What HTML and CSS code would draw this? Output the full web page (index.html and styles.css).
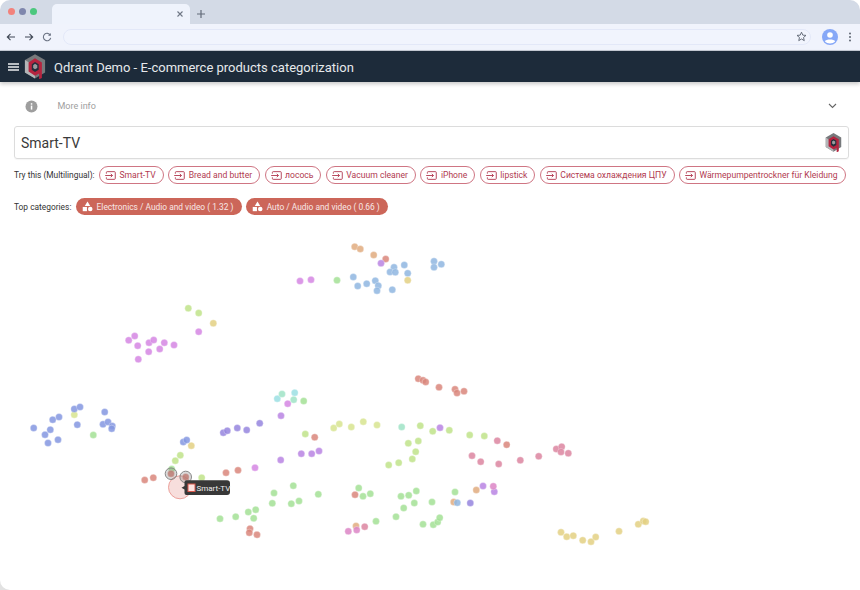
FILE: index.html
```html
<!DOCTYPE html>
<html lang="en">
<head>
<meta charset="utf-8">
<title>Qdrant Demo</title>
<link rel="stylesheet" href="styles.css">
</head>
<body>
<svg width="0" height="0" class="defs">
  <defs>
    <symbol id="qlogo" viewBox="0 0 24 27">
      <polygon points="12,0 23,6.500 23,20 12,26.500 1,20 1,6.500" fill="#77797c"/>
      <polygon points="1,6.500 6,9.500 6,17 12,20.500 12,26.500 1,20" fill="#b3b5b7"/>
      <polygon points="12,4.500 19.500,9 19.500,26 16.500,27.500 16.500,21 12,23.500 5,19 5,9" fill="#b5243f"/>
      <polygon points="12,8.500 16,11 16,17 12,19.500 8.500,17 8.500,11" fill="#23303c"/>
      <polygon points="12,10.500 14.500,12 14.500,15 12,16.500 10,15 10,12" fill="#9a9c9e"/>
    </symbol>
    <symbol id="ienter" viewBox="0 0 12 12">
      <path d="M1.500 4V2.700Q1.500 1.800 2.400 1.800H10.300Q11.200 1.800 11.200 2.700V9.300Q11.200 10.200 10.300 10.200H2.400Q1.500 10.200 1.500 9.300V8" fill="none" stroke="currentColor"/>
      <path d="M.2 6H8M6.300 4.200 8.200 6 6.300 7.800" fill="none" stroke="currentColor"/>
    </symbol>
    <symbol id="icats" viewBox="0 0 12 12">
      <path d="M6 .5 9 5.500H3Z" fill="#fff"/>
      <rect x=".8" y="6.500" width="4.600" height="4.600" fill="#fff"/>
      <circle cx="9" cy="8.800" r="2.500" fill="#fff"/>
    </symbol>
  </defs>
</svg>
<div class="window">
  <header class="browser">
    <div class="tabstrip">
      <div class="lights">
        <span class="light light-red"></span>
        <span class="light light-grey"></span>
        <span class="light light-green"></span>
      </div>
      <div class="tab">
        <svg class="tab-close" width="8" height="8" viewBox="0 0 8 8"><path d="M1.500 1.500 6.500 6.500M6.500 1.500 1.500 6.500" stroke="#6f7785" stroke-width="1.100"/></svg>
      </div>
      <svg class="tab-new" width="10" height="10" viewBox="0 0 10 10"><path d="M5 1V9M1 5H9" stroke="#626a78" stroke-width="1.200"/></svg>
    </div>
    <div class="toolbar">
      <svg class="nav-icon" width="10" height="10" viewBox="0 0 10 10"><path d="M9 5H1.500M4.500 1.800 1.300 5 4.500 8.200" fill="none" stroke="#3f4754" stroke-width="1.100"/></svg>
      <svg class="nav-icon" width="10" height="10" viewBox="0 0 10 10"><path d="M1 5H8.500M5.500 1.800 8.700 5 5.500 8.200" fill="none" stroke="#3f4754" stroke-width="1.100"/></svg>
      <svg class="nav-icon" width="10" height="10" viewBox="0 0 10 10"><path d="M8.300 3.200A3.700 3.700 0 1 0 8.700 5.800" fill="none" stroke="#6d7585" stroke-width="1.100"/><path d="M8.800.9V3.700H6Z" fill="#6d7585"/></svg>
      <div class="address">
        <svg width="11" height="11" viewBox="0 0 12 12"><path d="M6 1.300 7.400 4.500 10.900 4.800 8.200 7.100 9 10.500 6 8.700 3 10.500 3.800 7.100 1.100 4.800 4.600 4.500Z" fill="none" stroke="#5d6572" stroke-width="1"/></svg>
      </div>
      <svg class="avatar" width="16" height="16" viewBox="0 0 16 16"><circle cx="8" cy="8" r="8" fill="#86a8f7"/><circle cx="8" cy="6" r="2.800" fill="#fff"/><path d="M2.800 12.300C4 9.900 12 9.900 13.200 12.300 10.500 15.200 5.500 15.200 2.800 12.300Z" fill="#fff"/></svg>
      <svg class="menu-dots" width="4" height="10" viewBox="0 0 4 10"><circle cx="2" cy="1.500" r="1" fill="#5f6773"/><circle cx="2" cy="5" r="1" fill="#5f6773"/><circle cx="2" cy="8.500" r="1" fill="#5f6773"/></svg>
    </div>
  </header>
  <div class="appbar">
    <svg class="burger" width="11" height="8" viewBox="0 0 11 8"><path d="M0 1H11M0 4H11M0 7H11" stroke="#eceef0" stroke-width="1.300"/></svg>
    <svg class="app-logo" width="22" height="25"><use href="#qlogo"/></svg>
    <div class="app-title">Qdrant Demo - E-commerce products categorization</div>
  </div>
  <main class="content">
    <div class="info">
      <svg class="info-icon" width="13" height="13" viewBox="0 0 13 13"><circle cx="6.500" cy="6.500" r="6" fill="#9e9e9e"/><rect x="5.800" y="5.600" width="1.500" height="4" fill="#fff"/><rect x="5.800" y="3.200" width="1.500" height="1.500" fill="#fff"/></svg>
      <span class="info-text">More info</span>
      <svg class="info-chevron" width="9" height="6" viewBox="0 0 9 6"><path d="M1 1 4.500 4.500 8 1" fill="none" stroke="#666" stroke-width="1.100"/></svg>
    </div>
    <div class="search">
      <span class="search-text">Smart-TV</span>
      <svg width="17" height="19"><use href="#qlogo"/></svg>
    </div>
    <div class="chips chips-try">
      <span class="chips-label">Try this (Multilingual):</span>
      <span class="chip"><svg width="11" height="11"><use href="#ienter"/></svg>Smart-TV</span>
      <span class="chip"><svg width="11" height="11"><use href="#ienter"/></svg>Bread and butter</span>
      <span class="chip"><svg width="11" height="11"><use href="#ienter"/></svg>лосось</span>
      <span class="chip"><svg width="11" height="11"><use href="#ienter"/></svg>Vacuum cleaner</span>
      <span class="chip"><svg width="11" height="11"><use href="#ienter"/></svg>iPhone</span>
      <span class="chip"><svg width="11" height="11"><use href="#ienter"/></svg>lipstick</span>
      <span class="chip"><svg width="11" height="11"><use href="#ienter"/></svg>Система охлаждения ЦПУ</span>
      <span class="chip"><svg width="11" height="11"><use href="#ienter"/></svg>Wärmepumpentrockner für Kleidung</span>
    </div>
    <div class="chips chips-top">
      <span class="chips-label">Top categories:</span>
      <span class="chip chip-filled"><svg width="11" height="11"><use href="#icats"/></svg>Electronics / Audio and video ( 1.32 )</span>
      <span class="chip chip-filled"><svg width="11" height="11"><use href="#icats"/></svg>Auto / Audio and video ( 0.66 )</span>
    </div>
    <svg class="plot" width="860" height="370" viewBox="0 220 860 370">
      <g class="pts d-peach"><circle cx="354.7" cy="246.7" r="3.300"/><circle cx="360.3" cy="249" r="3.300"/><circle cx="373.7" cy="255" r="3.300"/><circle cx="453.7" cy="502" r="3.300"/><circle cx="476.3" cy="490" r="3.300"/><circle cx="356" cy="526" r="3.300"/></g>
      <g class="pts d-red"><circle cx="385.7" cy="259" r="3.300"/><circle cx="314.7" cy="437.3" r="3.300"/><circle cx="418.3" cy="378.7" r="3.300"/><circle cx="423" cy="380.3" r="3.300"/><circle cx="425.7" cy="382" r="3.300"/><circle cx="439" cy="387.3" r="3.300"/><circle cx="455" cy="389.3" r="3.300"/><circle cx="457" cy="393" r="3.300"/><circle cx="464" cy="391.3" r="3.300"/><circle cx="506.7" cy="444.7" r="3.300"/><circle cx="355" cy="494.7" r="3.300"/><circle cx="144.7" cy="480" r="3.300"/><circle cx="153.3" cy="477.7" r="3.300"/><circle cx="226" cy="472.7" r="3.300"/><circle cx="238" cy="470.3" r="3.300"/><circle cx="250" cy="528.7" r="3.300"/><circle cx="249.3" cy="532.7" r="3.300"/><circle cx="257" cy="534.7" r="3.300"/></g>
      <g class="pts d-violet"><circle cx="381" cy="263.3" r="3.300"/><circle cx="281" cy="415.7" r="3.300"/><circle cx="440" cy="427.7" r="3.300"/><circle cx="280.7" cy="460" r="3.300"/><circle cx="301.3" cy="453.7" r="3.300"/><circle cx="311.7" cy="453.7" r="3.300"/><circle cx="319" cy="451" r="3.300"/><circle cx="483" cy="486" r="3.300"/><circle cx="494.3" cy="491.7" r="3.300"/></g>
      <g class="pts d-blue"><circle cx="394" cy="267.3" r="3.300"/><circle cx="404.3" cy="265" r="3.300"/><circle cx="390" cy="272" r="3.300"/><circle cx="395.3" cy="272.3" r="3.300"/><circle cx="407.7" cy="273.3" r="3.300"/><circle cx="434" cy="261.3" r="3.300"/><circle cx="441.3" cy="264.3" r="3.300"/><circle cx="434" cy="267.3" r="3.300"/><circle cx="353.3" cy="277" r="3.300"/><circle cx="357.7" cy="286" r="3.300"/><circle cx="366.7" cy="283.7" r="3.300"/><circle cx="375.3" cy="280.7" r="3.300"/><circle cx="378.3" cy="285.7" r="3.300"/><circle cx="377" cy="290.7" r="3.300"/><circle cx="392.3" cy="289.7" r="3.300"/><circle cx="457.3" cy="502.7" r="3.300"/></g>
      <g class="pts d-yellow"><circle cx="407.7" cy="280.3" r="3.300"/><circle cx="213.3" cy="323.3" r="3.300"/><circle cx="191.3" cy="445.7" r="3.300"/><circle cx="561" cy="532.3" r="3.300"/><circle cx="566.7" cy="536.7" r="3.300"/><circle cx="573.3" cy="535.7" r="3.300"/><circle cx="582.7" cy="540.3" r="3.300"/><circle cx="591" cy="541.7" r="3.300"/><circle cx="595.7" cy="537" r="3.300"/><circle cx="619" cy="531.3" r="3.300"/><circle cx="638.3" cy="524.3" r="3.300"/><circle cx="643.3" cy="521" r="3.300"/><circle cx="645.7" cy="521.7" r="3.300"/></g>
      <g class="pts d-orchid"><circle cx="300" cy="281" r="3.300"/><circle cx="311" cy="279.7" r="3.300"/><circle cx="198.7" cy="331.7" r="3.300"/><circle cx="128.7" cy="340.3" r="3.300"/><circle cx="134.7" cy="336" r="3.300"/><circle cx="137.7" cy="345.7" r="3.300"/><circle cx="149" cy="342.7" r="3.300"/><circle cx="153.7" cy="340" r="3.300"/><circle cx="164.3" cy="342.7" r="3.300"/><circle cx="174" cy="345" r="3.300"/><circle cx="148.7" cy="351.7" r="3.300"/><circle cx="159.7" cy="349" r="3.300"/><circle cx="138.3" cy="359.3" r="3.300"/><circle cx="287.7" cy="403.7" r="3.300"/><circle cx="255" cy="467.7" r="3.300"/></g>
      <g class="pts d-green"><circle cx="337" cy="280.3" r="3.300"/><circle cx="93.3" cy="435" r="3.300"/><circle cx="303.7" cy="401" r="3.300"/><circle cx="293.3" cy="485.7" r="3.300"/><circle cx="274" cy="493" r="3.300"/><circle cx="272.3" cy="503.3" r="3.300"/><circle cx="291.3" cy="503.7" r="3.300"/><circle cx="299" cy="501" r="3.300"/><circle cx="318.3" cy="494.3" r="3.300"/><circle cx="358.7" cy="488" r="3.300"/><circle cx="363" cy="496.3" r="3.300"/><circle cx="370.3" cy="493.7" r="3.300"/><circle cx="401" cy="496.3" r="3.300"/><circle cx="408.7" cy="495.3" r="3.300"/><circle cx="416.3" cy="491" r="3.300"/><circle cx="414.3" cy="503" r="3.300"/><circle cx="403.7" cy="508" r="3.300"/><circle cx="396" cy="516.7" r="3.300"/><circle cx="376" cy="521.3" r="3.300"/><circle cx="432" cy="502" r="3.300"/><circle cx="455" cy="492" r="3.300"/><circle cx="423" cy="524.3" r="3.300"/><circle cx="433.3" cy="524.7" r="3.300"/><circle cx="437.7" cy="522" r="3.300"/><circle cx="439.7" cy="517.7" r="3.300"/><circle cx="171.7" cy="469" r="3.300"/><circle cx="220" cy="518.7" r="3.300"/><circle cx="235.7" cy="516.7" r="3.300"/><circle cx="248.3" cy="512" r="3.300"/><circle cx="255.7" cy="509.7" r="3.300"/><circle cx="253.7" cy="518.3" r="3.300"/></g>
      <g class="pts d-lime"><circle cx="188.3" cy="308.3" r="3.300"/><circle cx="198.7" cy="313" r="3.300"/><circle cx="305.3" cy="434" r="3.300"/><circle cx="420.3" cy="425.7" r="3.300"/><circle cx="432.7" cy="431.3" r="3.300"/><circle cx="449.3" cy="430.3" r="3.300"/><circle cx="408.3" cy="443.3" r="3.300"/><circle cx="418.3" cy="441" r="3.300"/><circle cx="415.7" cy="451.7" r="3.300"/><circle cx="412.3" cy="459" r="3.300"/><circle cx="398.7" cy="462.7" r="3.300"/><circle cx="388.7" cy="465" r="3.300"/><circle cx="469.7" cy="435" r="3.300"/><circle cx="484.3" cy="436" r="3.300"/><circle cx="180.3" cy="455.3" r="3.300"/><circle cx="175.3" cy="460.7" r="3.300"/><circle cx="201.7" cy="477.7" r="3.300"/></g>
      <g class="pts d-sallow"><circle cx="74.3" cy="414.7" r="3.300"/><circle cx="333.7" cy="428" r="3.300"/><circle cx="339.3" cy="424" r="3.300"/><circle cx="351.3" cy="427" r="3.300"/><circle cx="363.3" cy="421.7" r="3.300"/><circle cx="377" cy="425" r="3.300"/></g>
      <g class="pts d-indigo"><circle cx="33.7" cy="428" r="3.300"/><circle cx="45" cy="434.7" r="3.300"/><circle cx="50.3" cy="429.7" r="3.300"/><circle cx="48" cy="443" r="3.300"/><circle cx="58" cy="439.7" r="3.300"/><circle cx="52.7" cy="419.7" r="3.300"/><circle cx="59" cy="417" r="3.300"/><circle cx="74.3" cy="409" r="3.300"/><circle cx="80" cy="407" r="3.300"/><circle cx="77.3" cy="424.7" r="3.300"/><circle cx="104.7" cy="412" r="3.300"/><circle cx="103" cy="424.3" r="3.300"/><circle cx="108" cy="422" r="3.300"/><circle cx="112.3" cy="426" r="3.300"/><circle cx="111.7" cy="428.7" r="3.300"/><circle cx="183.3" cy="442" r="3.300"/><circle cx="186.7" cy="440" r="3.300"/></g>
      <g class="pts d-iris"><circle cx="223.3" cy="432.7" r="3.300"/><circle cx="227.3" cy="430.7" r="3.300"/><circle cx="237.3" cy="428" r="3.300"/><circle cx="246.7" cy="430" r="3.300"/><circle cx="259.7" cy="423.3" r="3.300"/><circle cx="470.3" cy="503" r="3.300"/></g>
      <g class="pts d-teal"><circle cx="277.3" cy="398.7" r="3.300"/><circle cx="294.7" cy="392.7" r="3.300"/></g>
      <g class="pts d-mint"><circle cx="282" cy="394" r="3.300"/><circle cx="293.7" cy="399.7" r="3.300"/><circle cx="401.700" cy="427" r="3.300"/></g>
      <g class="pts d-rose"><circle cx="497.3" cy="440.7" r="3.300"/><circle cx="472" cy="455.7" r="3.300"/><circle cx="480.7" cy="461.7" r="3.300"/><circle cx="498.7" cy="464" r="3.300"/><circle cx="520.3" cy="460.3" r="3.300"/><circle cx="538.7" cy="456.3" r="3.300"/><circle cx="556.3" cy="449" r="3.300"/><circle cx="561.7" cy="446.7" r="3.300"/><circle cx="561" cy="452" r="3.300"/><circle cx="568.3" cy="453.3" r="3.300"/><circle cx="364.7" cy="526.7" r="3.300"/></g>
      <g class="pts d-magenta"><circle cx="493.3" cy="486.3" r="3.300"/><circle cx="348.3" cy="531.3" r="3.300"/><circle cx="356.7" cy="530" r="3.300"/></g>
      <circle class="query" cx="180" cy="487.300" r="11.500"/>
      <g class="pts d-red"><circle cx="171" cy="473.7" r="3.300"/><circle cx="185.7" cy="477" r="3.300"/></g>
      <circle class="halo" cx="171" cy="473.7" r="5.800"/>
      <circle class="halo" cx="185.700" cy="477" r="5.800"/>
      <path class="tip" d="M186.500 480.300H227Q230 480.300 230 483.300V492Q230 495 227 495H186.500Q184.500 495 184.500 493V489.500L181.500 487.700 184.500 486V482.300Q184.500 480.300 186.500 480.300Z"/>
      <rect class="tip-swatch" x="188" y="484" width="7" height="7.500"/>
      <text class="tip-text" x="196.500" y="490.800">Smart-TV</text>
    </svg>
  </main>
</div>
</body>
</html>
```
FILE: styles.css
```css
* { box-sizing: border-box; }
html, body { margin: 0; padding: 0; }
body { width: 860px; height: 590px; overflow: hidden; font-family: Roboto, "Liberation Sans", sans-serif; background: linear-gradient(#fff 50%, #e2e2e2 50%); }
.defs { position: absolute; }
.window { width: 860px; height: 590px; overflow: hidden; border-radius: 10px 10px 0 10px; background: #fff; display: flex; flex-direction: column; }

.browser { flex: none; }
.tabstrip { height: 24px; background: #d3dae6; display: flex; align-items: flex-end; padding-left: 8px; }
.lights { display: flex; gap: 4px; width: 44px; align-self: flex-start; padding-top: 7.500px; }
.light { width: 7px; height: 7px; border-radius: 50%; }
.light-red { background: #f2827c; }
.light-grey { background: #7f87ad; }
.light-green { background: #4cc87e; }
.tab { width: 138px; height: 20px; background: #eff3fc; border-radius: 5px 5px 0 0; display: flex; justify-content: flex-end; align-items: center; padding-right: 6px; padding-bottom: 1px; }
.tab-new { margin: 0 0 5px 6px; }
.toolbar { height: 27px; background: #f0f3fc; border-bottom: 1px solid #c7ccd6; display: flex; align-items: center; padding: 0 8px 1px 6px; }
.nav-icon { margin-right: 8px; }
.address { flex: none; width: 748px; height: 16px; margin-left: 3px; border: 1px solid #e3e8f8; border-radius: 8px; background: #f1f4fd; display: flex; justify-content: flex-end; align-items: center; padding-right: 3px; }
.avatar { margin-left: 11px; }
.menu-dots { margin-left: 10px; }

.appbar { flex: none; height: 31px; background: #1d2b3a; display: flex; align-items: center; padding-left: 8px; box-shadow: 0 2px 4px rgba(0, 0, 0, .22); position: relative; }
.app-logo { margin-left: 5px; }
.app-title { margin-left: 8px; padding-top: 1px; color: #e6e9ec; font-size: 13px; }

.content { flex: 1; display: flex; flex-direction: column; min-height: 0; }
.info { height: 44px; flex: none; display: flex; align-items: center; padding: 4px 23px 0 24.500px; }
.info-text { margin-left: 20px; font-size: 9px; color: #9e9e9e; flex: 1; }
.search { flex: none; height: 33px; margin: 0 11px 0 14px; border: 1px solid #dcdcdc; border-radius: 3px; display: flex; align-items: center; justify-content: space-between; padding: 0 6px; box-shadow: 0 1px 1px rgba(0, 0, 0, .04); }
.search-text { font-size: 14px; color: #3a3a3a; }

.chips { flex: none; display: flex; align-items: center; padding-left: 14px; white-space: nowrap; }
.chips-try { height: 18px; margin-top: 7px; gap: 4.400px; }
.chips-top { height: 17px; margin-top: 14px; gap: 4.700px; }
.chips-label { font-size: 8.400px; color: #333; }
.chip { display: inline-flex; align-items: center; gap: 3.500px; height: 18px; padding: 0 7px 0 5px; border: 1px solid #cf7583; border-radius: 9px; color: #b13a50; font-size: 8.600px; }
.chip svg { flex: none; }
.chip-filled { height: 17px; background: #cc6659; border: 0; color: #f8e8e6; padding: 0 8px 0 6px; gap: 3.500px; font-size: 8.400px; }

.plot { flex: none; margin-top: 5px; display: block; }
.pts circle { r: 3.500px; stroke: rgba(255, 255, 255, .5); stroke-width: .6; fill-opacity: .85; }
.d-peach { fill: #e0ab7f; }
.d-red { fill: #d9867b; }
.d-violet { fill: #b884e3; }
.d-blue { fill: #8fb6e0; }
.d-yellow { fill: #e3d083; }
.d-orchid { fill: #d586e3; }
.d-green { fill: #a3e095; }
.d-lime { fill: #bfe38a; }
.d-sallow { fill: #d7e48f; }
.d-indigo { fill: #8496e0; }
.d-iris { fill: #9585de; }
.d-teal { fill: #9bdfe3; }
.d-mint { fill: #9fe3c5; }
.d-rose { fill: #dc85a0; }
.d-magenta { fill: #dc85c6; }
.query { fill: rgba(240, 190, 185, .5); stroke: #eca29c; stroke-width: 1; }
.halo { fill: rgba(90, 90, 90, .22); stroke: #7d7d7d; stroke-width: .9; }
.tip { fill: #383838; }
.tip-swatch { fill: #fbe3e1; stroke: #d8564b; stroke-width: 1; }
.tip-text { fill: #eee; font-size: 8px; font-family: Roboto, sans-serif; }
```
